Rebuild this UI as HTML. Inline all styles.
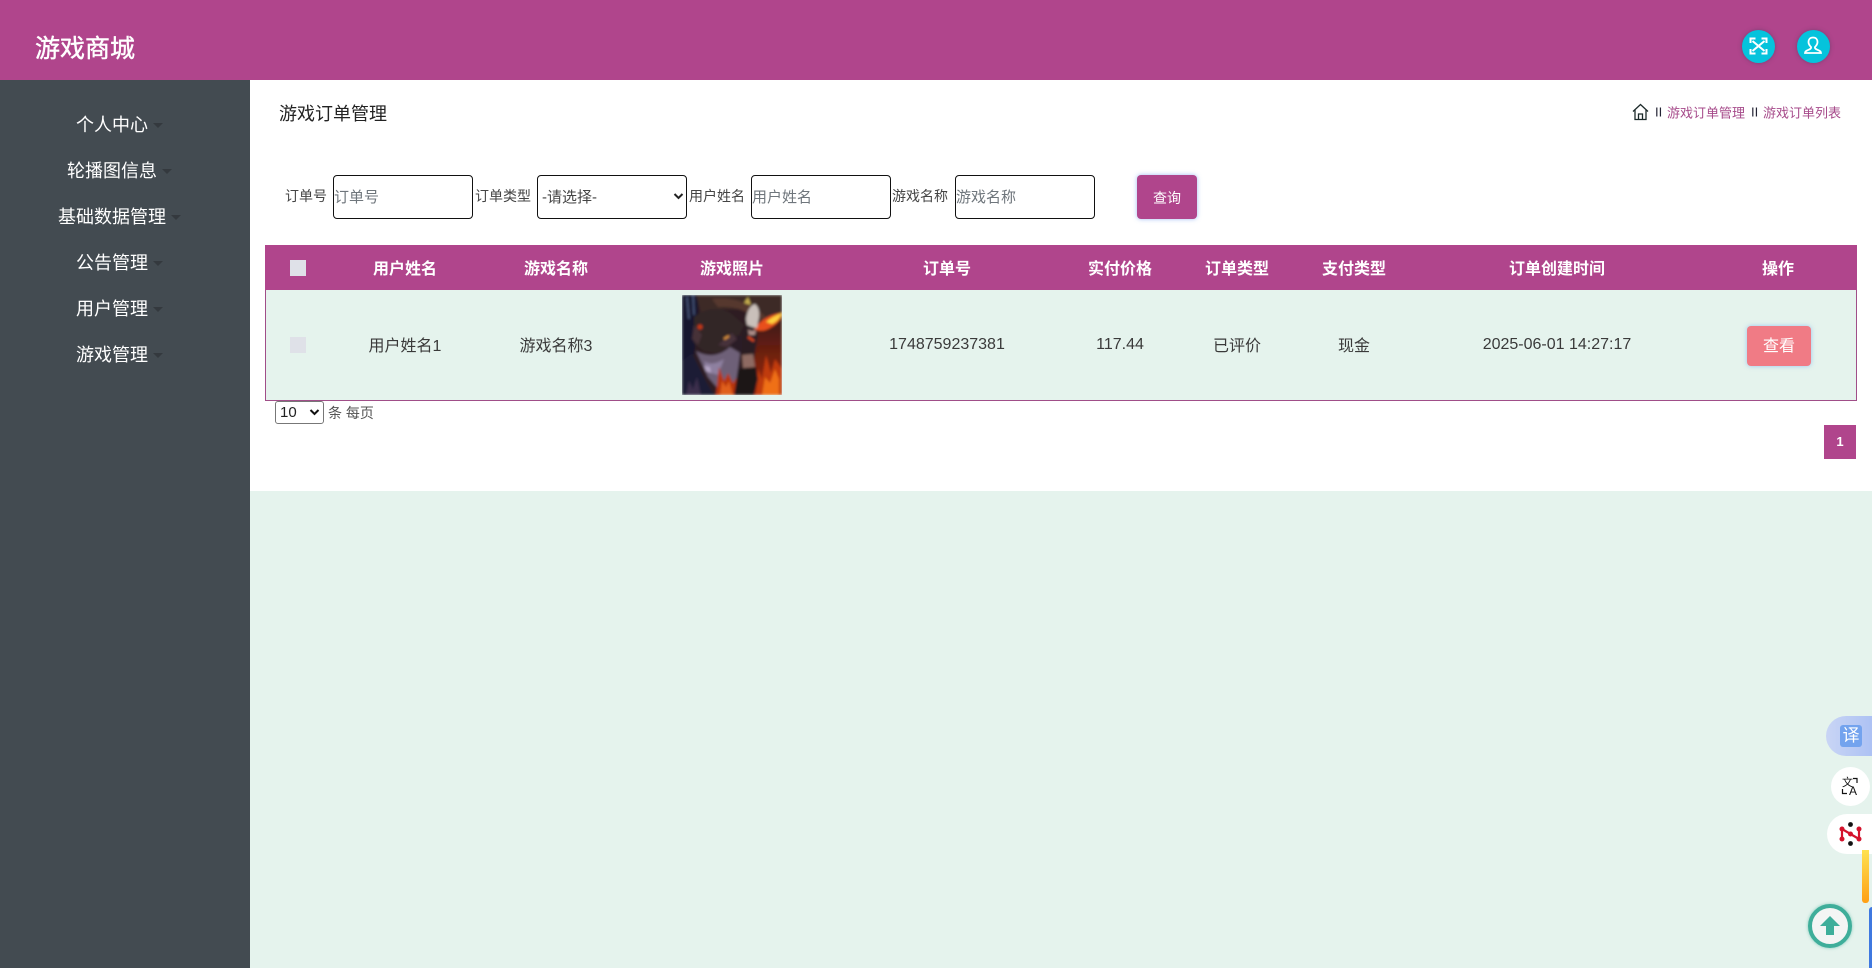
<!DOCTYPE html>
<html lang="zh">
<head>
<meta charset="utf-8">
<title>游戏订单管理</title>
<style>
html,body{margin:0;padding:0;width:1872px;height:968px;overflow:hidden;background:#e5f3ed;font-family:"Liberation Sans","Noto Sans CJK SC",sans-serif;color:#333}
*{box-sizing:border-box}
.a{position:absolute;white-space:nowrap}
.c{transform:translate(-50%,-50%)}
.m{transform:translateY(-50%)}
.nav{position:absolute;left:0;width:239px;text-align:center;color:#fff;font-size:18px;line-height:24px;height:24px}
.nav i{display:inline-block;width:0;height:0;border:5px solid transparent;border-top:5px solid #34393e;border-bottom:0;margin-left:5px;vertical-align:3px}
.in{position:absolute;top:175px;height:44px;border:1px solid #111;border-radius:4px;background:#fff;font-size:15px;color:#6f767c;line-height:44px;padding-left:0;white-space:nowrap}
.lb{position:absolute;top:196px;transform:translateY(-50%);font-size:14px;color:#444;white-space:nowrap}
.th{position:absolute;top:267px;transform:translate(-50%,-50%);color:#fff;font-weight:bold;font-size:16px;white-space:nowrap}
.td{position:absolute;top:344px;transform:translate(-50%,-50%);color:#3a3a3a;font-size:16px;white-space:nowrap}
.fab{position:absolute;border-radius:50%;background:#05c3dc;width:33px;height:33px;top:30px;box-shadow:0 0 4px rgba(60,60,90,.5)}
</style>
</head>
<body>
<div class="a" style="left:0;top:0;width:1872px;height:80px;background:#b0458c"></div>
<div class="a m" style="left:35px;top:47px;font-size:25px;color:#fff;-webkit-text-stroke:.4px #fff">游戏商城</div>
<div class="fab" style="left:1742px">
<svg width="33" height="33" viewBox="0 0 33 33" fill="none" stroke="#fff" stroke-width="2"><path d="M10.500 11l12 10M22.500 11l-12 10"/><path d="M8.500 13V8.500h5M19.500 8.500h5V13M24.500 19v4.500h-5M13.500 23.500h-5V19" stroke-width="2"/></svg>
</div>
<div class="fab" style="left:1797px">
<svg width="33" height="33" viewBox="0 0 33 33" fill="none" stroke="#fff" stroke-width="1.800"><path d="M16 7.500c-3 0-4.500 2-4.500 4.500s1.500 4 2.500 5c.5 1-.5 2-2.500 2.800-2 .8-3.500 1.500-3.500 3.200h16c0-1.700-1.500-2.400-3.500-3.200-2-.8-3-1.800-2.500-2.800 1-1 2.500-2.500 2.500-5S19 7.500 16 7.500z"/></svg>
</div>

<div class="a" style="left:0;top:80px;width:250px;height:888px;background:#434b51"></div>
<div class="nav" style="top:112.500px">个人中心<i></i></div>
<div class="nav" style="top:158.500px">轮播图信息<i></i></div>
<div class="nav" style="top:204.500px">基础数据管理<i></i></div>
<div class="nav" style="top:250.500px">公告管理<i></i></div>
<div class="nav" style="top:296.500px">用户管理<i></i></div>
<div class="nav" style="top:342.500px">游戏管理<i></i></div>

<div class="a" style="left:250px;top:80px;width:1622px;height:411px;background:#fff"></div>
<div class="a m" style="left:279px;top:113px;font-size:18px;color:#222">游戏订单管理</div>

<svg class="a" style="left:1632px;top:103px" width="17" height="18" viewBox="0 0 17 18" fill="none" stroke="#1c2a2a" stroke-width="1.300"><path d="M1 8.500L8.500 1.500 16 8.500"/><path d="M3 7v9.500h11V7"/><path d="M6.500 16.500V11h4v5.500"/></svg>
<div class="a m" style="left:1655px;top:112px;font-size:13px;color:#223">II</div>
<div class="a m" style="left:1667px;top:111.500px;font-size:13px;color:#a64a8a">游戏订单管理</div>
<div class="a m" style="left:1751px;top:112px;font-size:13px;color:#223">II</div>
<div class="a m" style="left:1763px;top:111.500px;font-size:13px;color:#a64a8a">游戏订单列表</div>

<div class="lb" style="left:285px">订单号</div>
<div class="in" style="left:333px;width:140px">订单号</div>
<div class="lb" style="left:475px">订单类型</div>
<div class="in" style="left:537px;width:150px;color:#444;padding-left:4px">-请选择-
<svg style="position:absolute;right:2px;top:16px" width="11" height="9" viewBox="0 0 11 9" fill="none" stroke="#222" stroke-width="2"><path d="M1.500 2l4 4 4-4"/></svg></div>
<div class="lb" style="left:689px">用户姓名</div>
<div class="in" style="left:751px;width:140px">用户姓名</div>
<div class="lb" style="left:892px">游戏名称</div>
<div class="in" style="left:955px;width:140px">游戏名称</div>
<div class="a" style="left:1137px;top:175px;width:60px;height:44px;background:#b0458c;border-radius:4px;box-shadow:0 0 5px rgba(120,160,240,.7);color:#fff;font-size:14px;line-height:46px;text-align:center">查询</div>

<div class="a" style="left:265px;top:245px;width:1592px;height:156px;border:1px solid #a04e88;border-top:0;background:#e5f3ed"></div>
<div class="a" style="left:265px;top:245px;width:1592px;height:45px;background:#b0458c"></div>
<div class="a" style="left:290px;top:260px;width:16px;height:16px;background:#dfe1e8"></div>
<div class="th" style="left:405px">用户姓名</div>
<div class="th" style="left:556px">游戏名称</div>
<div class="th" style="left:732px">游戏照片</div>
<div class="th" style="left:947px">订单号</div>
<div class="th" style="left:1120px">实付价格</div>
<div class="th" style="left:1237px">订单类型</div>
<div class="th" style="left:1354px">支付类型</div>
<div class="th" style="left:1557px">订单创建时间</div>
<div class="th" style="left:1778px">操作</div>

<div class="a" style="left:290px;top:337px;width:16px;height:16px;background:#dfe1e8"></div>
<div class="td" style="left:405px;top:344px">用户姓名1</div>
<div class="td" style="left:556px;top:344px">游戏名称3</div>
<svg class="a" style="left:682px;top:295px" width="100" height="100" viewBox="0 0 100 100">
<defs>
<filter id="b" x="-10%" y="-10%" width="120%" height="120%"><feGaussianBlur stdDeviation="1.200"/></filter>
<clipPath id="cp"><rect width="100" height="100"/></clipPath>
<linearGradient id="r" x1="0" y1="0" x2="0" y2="1"><stop offset="0" stop-color="#3a1c18"/><stop offset=".5" stop-color="#70200f"/><stop offset="1" stop-color="#a02a08"/></linearGradient>
</defs>
<g clip-path="url(#cp)" filter="url(#b)">
<rect width="100" height="100" fill="#2e1e22"/>
<path d="M0 0h16v30l-4 30-12 10z" fill="#15142e"/>
<path d="M5 2l2 22M11 0l1 20" stroke="#4c5a80" stroke-width="1.500"/>
<path d="M14 0h86v22l-18 6L66 14 40 14 22 28z" fill="#3e2a28"/>
<path d="M30 4Q60 0 84 22L76 26Q60 10 36 12z" fill="#57392f"/>
<path d="M12 22Q30 8 48 18L62 30 52 50 34 58 22 56 12 48z" fill="#332628"/>
<path d="M12 30l8 10-4 10-6-6z" fill="#473238"/>
<circle cx="18" cy="32" r="2.500" fill="#c63814"/>
<path d="M74 30l26-8v78H62z" fill="url(#r)"/>
<path d="M14 56Q32 66 48 52L58 58 54 90 38 96 26 82z" fill="#6e6078"/>
<path d="M22 66q8 6 20-2l-6 16-10-3z" fill="#8e80a0"/>
<path d="M22 70q3 2 6 2l1 6-5-2z" fill="#b5a6c6"/>
<path d="M0 66l10-8 8 16 6 12 8 14H0z" fill="#1b1a34"/>
<path d="M4 100l3-14 4 8 4-12 4 18z" fill="#3a2f4c"/>
<path d="M34 100l3-28 5 14 4-8 5 10 4-6 3 18z" fill="#b8340e"/>
<path d="M38 100l2-14 4 6 3-6 4 14z" fill="#e0601a"/>
<path d="M74 100l2-26 4 10 4-24 5 18 4-14 7 10v26z" fill="#c03a0c"/>
<path d="M80 100l3-18 5 6 5-14 4 10v16z" fill="#ef7018"/>
<path d="M72 34q10-14 28-16-1 9-12 15-8 5-16 1z" fill="#e8501a"/>
<path d="M84 27q7-6 16-9-3 8-10 11z" fill="#ffd23c"/>
<path d="M54 40l8 2 4 14-8 2-10-8z" fill="#2c1e28"/>
<path d="M36 50l14-12 5 6-10 8z" fill="#46303a"/>
<path d="M42 44l5-3" stroke="#e89a3c" stroke-width="2"/>
<path d="M60 36q4-6 10-4l6 8-4 24h-12z" fill="#2a1c24"/>
<path d="M60 60l11-1 2 13-12 1z" fill="#8e6a62"/>
<path d="M56 74l18-2 2 12-4 16H52z" fill="#1f1418"/>
<path d="M62 8l4-6 3 8z" fill="#c8b050"/>
<path d="M64 24q2-13 9-15 5 4 4 13l-2 11-5-1-5-2z" fill="#c9c0ba"/>
<path d="M66 34q4 4 8 0l-1 6h-6z" fill="#b0908a"/>
<path d="M72 46l-6-4" stroke="#e84c1c" stroke-width="2"/>
</g>
</svg>
<div class="td" style="left:947px;top:345px">1748759237381</div>
<div class="td" style="left:1120px;top:345px">117.44</div>
<div class="td" style="left:1237px;top:344px">已评价</div>
<div class="td" style="left:1354px;top:344px">现金</div>
<div class="td" style="left:1557px;top:345px">2025-06-01 14:27:17</div>
<div class="a" style="left:1747px;top:326px;width:64px;height:40px;background:#f07b85;border-radius:4px;box-shadow:0 0 5px rgba(120,180,240,.7);color:#fff;font-size:16px;line-height:42px;text-align:center">查看</div>

<div class="a" style="left:275px;top:401px;width:49px;height:23px;border:1px solid #777;border-radius:3px;background:#fff;font-size:15px;line-height:21px;padding-left:4px;color:#222">10
<svg style="position:absolute;right:3px;top:6px" width="11" height="9" viewBox="0 0 11 9" fill="none" stroke="#111" stroke-width="2"><path d="M1.500 2l4 4 4-4"/></svg></div>
<div class="a m" style="left:328px;top:413px;font-size:14px;color:#555">条 每页</div>
<div class="a" style="left:1824px;top:425px;width:32px;height:34px;background:#b0458c;color:#fff;font-size:13px;font-weight:bold;line-height:34px;text-align:center">1</div>

<div class="a" style="left:1826px;top:716px;width:46px;height:40px;border-radius:20px 0 0 20px;background:linear-gradient(90deg,#c9d5f5,#adc2f4)"></div>
<div class="a" style="left:1840px;top:725px;width:22px;height:22px;border-radius:3px;background:#73a3ee;color:#fff;font-size:17px;line-height:22px;text-align:center">译</div>
<div class="a" style="left:1831px;top:767px;width:39px;height:39px;border-radius:50%;background:#fff"></div>
<div class="a" style="left:1842px;top:778px;font-size:11px;line-height:11px;color:#111">文</div>
<div class="a" style="left:1849px;top:785px;font-size:12px;line-height:12px;color:#111">A</div>
<svg class="a" style="left:1841px;top:777px" width="18" height="18" viewBox="0 0 18 18" fill="none" stroke="#111" stroke-width="1.200"><path d="M12 1.500h4V6M1.500 12v4.500H6"/></svg>
<div class="a" style="left:1827px;top:814px;width:45px;height:40px;border-radius:20px 0 0 20px;background:#fff"></div>
<svg class="a" style="left:1838px;top:820px" width="26" height="28" viewBox="0 0 26 28"><circle cx="12.500" cy="4.500" r="2.400" fill="#111"/><circle cx="12.500" cy="23.500" r="2.400" fill="#111"/><path d="M4 9v10M4 9l17 10M21 9v10" stroke="#d4122c" stroke-width="2.200" fill="none"/><circle cx="4" cy="9" r="2.500" fill="#d4122c"/><circle cx="4" cy="19" r="2.500" fill="#d4122c"/><circle cx="21" cy="9" r="2.500" fill="#d4122c"/><circle cx="21" cy="19" r="2.500" fill="#d4122c"/><circle cx="12.500" cy="14" r="2.500" fill="#d4122c"/></svg>
<div class="a" style="left:1862px;top:850px;width:7px;height:53px;border-radius:0 0 3px 3px;background:linear-gradient(180deg,#ffe251,#ff9f14)"></div>
<div class="a" style="left:1869px;top:907px;width:3px;height:61px;border-radius:3px 0 0 0;background:#3f78e0"></div>
<div class="a" style="left:1808px;top:904px;width:44px;height:44px;border-radius:50%;background:#f4f5f4;border:4px solid #3fae9a;box-shadow:0 0 3px rgba(63,174,154,.6)"></div>
<svg class="a" style="left:1820px;top:916px" width="20" height="20" viewBox="0 0 20 20"><path d="M10 0L20 10h-6v9H6v-9H0z" fill="#3fae9a"/></svg>
</body>
</html>
